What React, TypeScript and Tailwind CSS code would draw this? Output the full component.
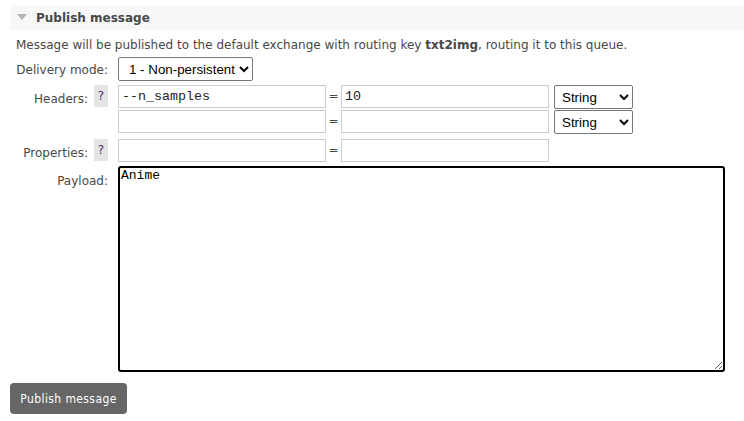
import React, { useState } from "react";

const labelFont = "font-['DejaVu_Sans',Verdana,sans-serif]";
const monoFont = "font-['Liberation_Mono','Courier_New',monospace]";
const ctrlFont = "font-['Liberation_Sans',Arial,sans-serif]";

const HelpBox: React.FC = () => (
  <span className="inline-flex items-center justify-center w-[14px] h-[22px] bg-[#e4e4e4] text-[#5a2d7a] text-[12px] ml-[6px]">
    ?
  </span>
);

const TextInput: React.FC<{ value?: string }> = ({ value }) => {
  const [v, setV] = useState(value ?? "");
  return (
    <input
      value={v}
      onChange={(e) => setV(e.target.value)}
      className={`w-[208px] h-[23px] border border-[#cccccc] px-[3px] text-[13.33px] text-[#222] outline-none ${monoFont}`}
    />
  );
};

const TypeSelect: React.FC = () => (
  <select
    className={`w-[79px] h-[24px] border border-[#767676] rounded-[2px] bg-white pl-[3px] text-[13.33px] text-black ${ctrlFont}`}
    defaultValue="string"
  >
    <option value="string">String</option>
    <option value="number">Number</option>
    <option value="boolean">Boolean</option>
  </select>
);

export default function App() {
  const [payload, setPayload] = useState("Anime");

  return (
    <div className={`w-[744px] h-[421px] bg-white text-[#484848] text-[12px] ${labelFont}`}>
      <div className="pt-[5px] pl-[10px]">
        {/* Section header */}
        <div className="h-[25px] bg-[#f8f8f8] flex items-center">
          <svg width="10" height="7" viewBox="0 0 10 7" className="ml-[7px]">
            <path d="M0 0 L10 0 L5 6 Z" fill="#b4b4b4" />
          </svg>
          <h2 className="ml-[9px] text-[12px] font-bold text-[#484848]">Publish message</h2>
        </div>

        <p className="ml-[6px] mt-[8px] leading-[15px]">
          Message will be published to the default exchange with routing key <b>txt2img</b>, routing it to this queue.
        </p>

        <div className="mt-[4px] flex flex-col">
          {/* Delivery mode */}
          <div className="flex items-center">
            <div className="w-[100px] text-right pr-[2px] pt-[2px]">Delivery mode:</div>
            <select
              className={`ml-[8px] w-[135px] h-[24px] border border-[#767676] rounded-[2px] bg-white pl-[6px] text-[13.33px] text-black ${ctrlFont}`}
              defaultValue="1"
            >
              <option value="1">1 - Non-persistent</option>
              <option value="2">2 - Persistent</option>
            </select>
          </div>

          {/* Headers */}
          <div className="flex mt-[4px]">
            <div className="w-[100px] pr-[2px] flex justify-end items-start">
              <span className="mt-[5px]">Headers:</span>
              <HelpBox />
            </div>
            <div className="ml-[8px] flex flex-col gap-[1px]">
              <div className="flex items-start">
                <TextInput value="--n_samples" />
                <span className="w-[15px] text-center leading-[22px]">=</span>
                <TextInput value="10" />
                <span className="ml-[5px]">
                  <TypeSelect />
                </span>
              </div>
              <div className="flex items-start">
                <TextInput />
                <span className="w-[15px] text-center leading-[22px]">=</span>
                <TextInput />
                <span className="ml-[5px]">
                  <TypeSelect />
                </span>
              </div>
            </div>
          </div>

          {/* Properties */}
          <div className="flex mt-[5px]">
            <div className="w-[100px] pr-[2px] flex justify-end items-start">
              <span className="mt-[5px]">Properties:</span>
              <HelpBox />
            </div>
            <div className="ml-[8px] flex items-start">
              <TextInput />
              <span className="w-[15px] text-center leading-[22px]">=</span>
              <TextInput />
            </div>
          </div>

          {/* Payload */}
          <div className="flex mt-[4px]">
            <div className="w-[100px] text-right pr-[2px] pt-[6px]">Payload:</div>
            <textarea
              value={payload}
              onChange={(e) => setPayload(e.target.value)}
              className={`ml-[8px] w-[607px] h-[206px] border-2 border-black rounded-[3px] px-[1px] py-0 text-[13px] leading-[16px] text-black outline-none ${monoFont}`}
            />
          </div>
        </div>

        <button className="mt-[11px] w-[117px] h-[31px] rounded-[4px] bg-[#666666] text-white text-[12px] font-['DejaVu_Sans_Condensed','DejaVu_Sans',sans-serif] tracking-[0.4px]">
          Publish message
        </button>
      </div>
    </div>
  );
}
